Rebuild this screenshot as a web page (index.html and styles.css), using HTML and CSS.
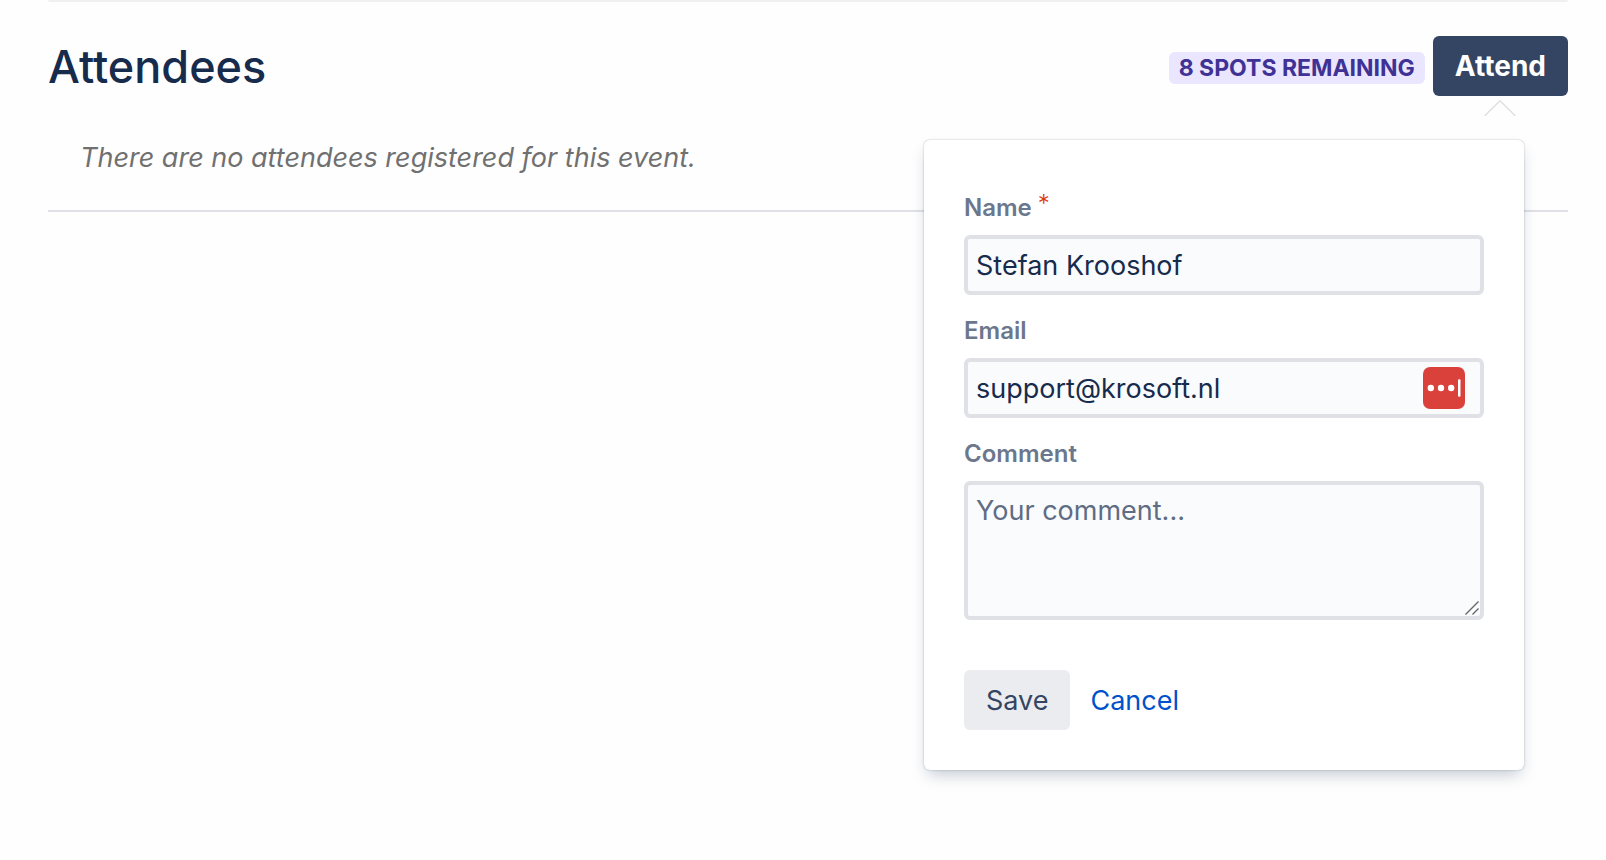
FILE: index.html
```html
<!DOCTYPE html>
<html lang="en">
<head>
<meta charset="utf-8">
<meta name="viewport" content="width=device-width, initial-scale=1">
<title>Attendees</title>
<link rel="stylesheet" href="styles.css">
</head>
<body>
<main class="page">
  <div class="panel-edge"></div>
  <section class="attendees">
    <header class="attendees-header">
      <h1 class="title">Attendees</h1>
      <div class="actions">
        <span class="badge">8 spots remaining</span>
        <div class="attend">
          <button class="button button-primary" type="button" aria-expanded="true">Attend</button>
          <svg class="arrow" viewBox="0 0 32 16" aria-hidden="true"><path d="M0.5 16 16 0.8 31.5 16" fill="none" stroke="#dedfe3" stroke-width="1.4"/></svg>
        </div>
      </div>
    </header>
    <p class="empty">There are no attendees registered for this event.</p>
    <form class="dialog">
      <div class="field">
        <label class="label" for="name">Name <span class="required">*</span></label>
        <input class="control" id="name" type="text" value="Stefan Krooshof" required>
      </div>
      <div class="field">
        <label class="label" for="email">Email</label>
        <div class="control-wrap">
          <input class="control" id="email" type="email" value="support@krosoft.nl">
          <button class="autofill" type="button" aria-label="Fill in email">
            <svg class="autofill-icon" viewBox="0 0 42 42" aria-hidden="true">
              <rect width="42" height="42" rx="7" fill="#d9413a"/>
              <g fill="#fff"><circle cx="7.8" cy="21" r="3.2"/><circle cx="18" cy="21" r="3.2"/><circle cx="28.2" cy="21" r="3.2"/><rect x="35" y="12.3" width="2.5" height="17.4" rx="1"/></g>
            </svg>
          </button>
        </div>
      </div>
      <div class="field">
        <label class="label" for="comment">Comment</label>
        <div class="control-wrap">
          <textarea class="control control-area" id="comment" placeholder="Your comment..."></textarea>
          <svg class="grip" viewBox="0 0 14 14" aria-hidden="true"><path d="M0.5 13.5 13.5 0.5M7.5 13.5 13.5 7.5" fill="none" stroke="#666" stroke-width="1.4"/></svg>
        </div>
      </div>
      <div class="form-actions">
        <button class="button button-subtle" type="submit">Save</button>
        <a class="cancel" href="#">Cancel</a>
      </div>
    </form>
  </section>
</main>
</body>
</html>
```
FILE: styles.css
```css
* { box-sizing: border-box; }

body {
  margin: 0;
  background: #fefefe;
  color: #172b4d;
  font-family: Inter, "Liberation Sans", sans-serif;
  font-size: 27px;
  font-variant-ligatures: none;
}

.page {
  min-height: 100vh;
  padding: 0 38px 48px 48px;
}

.panel-edge {
  height: 2px;
  background: #f0f0f0;
  border-radius: 0 0 4px 4px;
}

.attendees {
  position: relative;
  padding-top: 34px;
  border-bottom: 2px solid #dfe1e6;
}

.attendees-header {
  display: flex;
  align-items: flex-start;
  justify-content: space-between;
}

.title {
  margin: 0;
  font-size: 45px;
  font-weight: 500;
  line-height: 62px;
}

.actions {
  display: flex;
  align-items: baseline;
  gap: 8px;
}

.badge {
  padding: 0 10px;
  border-radius: 6px;
  background: #eae6ff;
  color: #403294;
  font-size: 23px;
  font-weight: 700;
  line-height: 32px;
  text-transform: uppercase;
}

.attend { position: relative; }

.button {
  display: block;
  height: 60px;
  padding: 0 22px;
  border: 0;
  border-radius: 6px;
  font: inherit;
  cursor: pointer;
}

.button-primary {
  background: #344563;
  color: #fff;
  font-size: 28px;
  font-weight: 700;
}

.button-subtle {
  background: #ebecf0;
  color: #344563;
}

.arrow {
  position: absolute;
  top: 64px;
  left: calc(50% - 16px);
  width: 32px;
  height: 16px;
}

.empty {
  margin: 0;
  padding: 40px 32px 32px;
  color: #707070;
  font-style: italic;
  line-height: 40px;
}

.dialog {
  position: absolute;
  top: 138px;
  right: 44px;
  width: 600px;
  padding: 56px 40px 40px;
  border-radius: 6px;
  background: #fff;
  box-shadow: 0 8px 16px -4px rgba(9, 30, 66, 0.25), 0 0 2px rgba(9, 30, 66, 0.31);
}

.field { margin-bottom: 24px; }

.label {
  display: block;
  margin-bottom: 15px;
  color: #6b778c;
  font-size: 24px;
  font-weight: 600;
  line-height: 24px;
}

.required {
  color: #de350b;
  font-weight: 300;
  line-height: 0;
  vertical-align: 4px;
}

.control-wrap { position: relative; }

.control {
  display: block;
  width: 100%;
  height: 60px;
  padding: 0 8px;
  border: 4px solid #dfe1e6;
  border-radius: 6px;
  background: #fafbfc;
  color: #172b4d;
  font: inherit;
}

.control-area {
  height: 139px;
  padding: 6px 8px;
  line-height: 40px;
  resize: none;
}

.control::placeholder {
  color: #5e6c84;
  opacity: 1;
}

.autofill {
  position: absolute;
  top: 9px;
  right: 19px;
  width: 42px;
  height: 42px;
  padding: 0;
  border: 0;
  background: none;
}

.autofill-icon { display: block; }

.grip {
  position: absolute;
  right: 5px;
  bottom: 5px;
  width: 14px;
  height: 14px;
}

.form-actions {
  display: flex;
  align-items: center;
  gap: 20px;
  padding-top: 26px;
}

.cancel {
  color: #0052cc;
  text-decoration: none;
}
```
